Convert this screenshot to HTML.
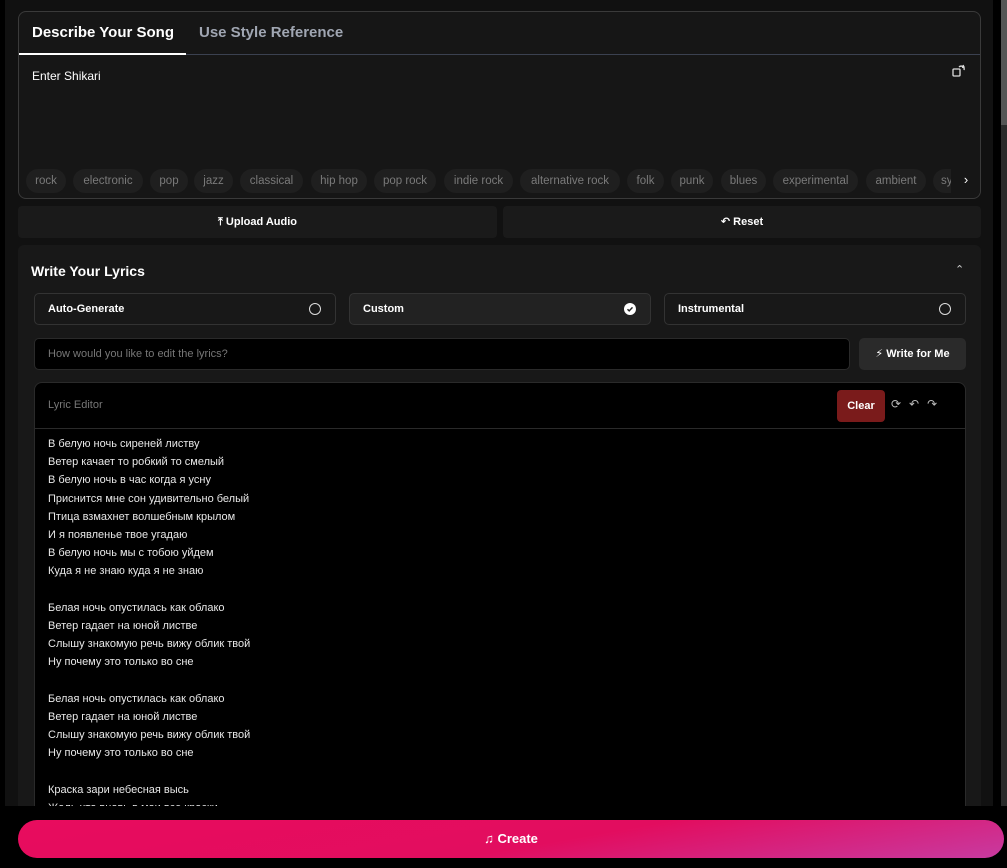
<!DOCTYPE html><html><head><meta charset="utf-8"><style>
*{box-sizing:border-box;margin:0;padding:0}
body{width:1007px;height:868px;background:#000;font-family:"Liberation Sans","DejaVu Sans",sans-serif;color:#fff;position:relative;overflow:hidden}
.main{position:absolute;left:5px;top:0;width:988px;height:806px;background:#111}
.sb{position:absolute;left:1001px;top:0;width:6px;height:806px;background:#2a2a2a}
.sb i{position:absolute;left:0;top:0;width:6px;height:125px;background:#555}
.abs{position:absolute}
.panel{left:18px;top:11px;width:963px;height:188px;border:1px solid #3a3a3a;border-radius:8px;background:#161616;overflow:hidden}
.tab{font-size:15px;font-weight:bold;top:12px}
.tags span{position:absolute;top:157px;background:#1f1f1f;color:#7a7a7a;font-size:11.5px;border-radius:12px;height:24px;line-height:24px;text-align:center;white-space:nowrap;overflow:hidden}
.btn{background:#1a1a1a;border-radius:4px;font-size:11px;font-weight:bold;text-align:center;line-height:32px;height:32px;top:206px}
.lyr{left:18px;top:245px;width:963px;height:600px;background:#181818;border-radius:6px}
.opt{top:293px;height:32px;border:1px solid #333;border-radius:5px;font-size:11px;font-weight:bold;padding-left:13px;line-height:30px;background:#181818}
.opt .c{position:absolute;right:14px;top:9px;width:12px;height:12px;border:1.5px solid #ddd;border-radius:50%}
.ed{left:34px;top:382px;width:932px;height:440px;background:#000;border:1px solid #2a2a2a;border-radius:8px}
.ly{position:absolute;left:13px;top:52px;font-size:11px;line-height:18.2px;color:#e8e8e8}
</style></head><body>
<div class="main"></div>
<div class="sb"><i></i></div>
<div class="abs panel">
 <div class="abs tab" style="left:13px;color:#fff">Describe Your Song</div>
 <div class="abs tab" style="left:180px;color:#a0a6b2;font-weight:600">Use Style Reference</div>
 <div class="abs" style="left:0;top:42px;width:961px;height:1px;background:#3b4150"></div>
 <div class="abs" style="left:0;top:41px;width:167px;height:2px;background:#fff"></div>
 <div class="abs" style="left:13px;top:57px;font-size:12px">Enter Shikari</div>
 <svg class="abs" style="left:933px;top:52px" width="14" height="14" viewBox="0 0 14 14" fill="none" stroke="#ddd" stroke-width="1.3"><rect x="1" y="5" width="7" height="7" rx="1"/><path d="M7 3a3 3 0 0 1 5 3M11 1l1 2-2 .5"/></svg>
 <div class="tags">
 <span style="left:7px;width:40px">rock</span>
 <span style="left:54px;width:70px">electronic</span>
 <span style="left:131px;width:38px">pop</span>
 <span style="left:175px;width:39px">jazz</span>
 <span style="left:221px;width:63px">classical</span>
 <span style="left:292px;width:56px">hip hop</span>
 <span style="left:355px;width:62px">pop rock</span>
 <span style="left:425px;width:69px">indie rock</span>
 <span style="left:501px;width:100px">alternative rock</span>
 <span style="left:608px;width:37px">folk</span>
 <span style="left:652px;width:42px">punk</span>
 <span style="left:702px;width:45px">blues</span>
 <span style="left:754px;width:85px">experimental</span>
 <span style="left:847px;width:60px">ambient</span>
 <span style="left:914px;width:40px;text-align:left;padding-left:8px">synth</span>
 </div>
 <div class="abs" style="left:932px;top:157px;width:30px;height:24px;background:#161616;font-size:13px;line-height:22px;text-align:center">›</div>
</div>
<div class="abs btn" style="left:18px;width:479px">⤒ Upload Audio</div>
<div class="abs btn" style="left:503px;width:478px">↶ Reset</div>
<div class="abs lyr"></div>
<div class="abs" style="left:31px;top:263px;font-size:14px;font-weight:bold">Write Your Lyrics</div>
<div class="abs" style="left:955px;top:263px;font-size:11px;color:#ccc">⌃</div>
<div class="abs opt" style="left:34px;width:302px">Auto-Generate<i class="c"></i></div>
<div class="abs opt" style="left:349px;width:302px;background:#222">Custom<svg class="abs" style="right:14px;top:9px" width="12" height="12" viewBox="0 0 12 12"><circle cx="6" cy="6" r="6" fill="#fff"/><path d="M3.5 6.2l1.7 1.7 3.3-3.5" fill="none" stroke="#222" stroke-width="1.4"/></svg></div>
<div class="abs opt" style="left:664px;width:302px">Instrumental<i class="c"></i></div>
<div class="abs" style="left:34px;top:338px;width:816px;height:32px;background:#000;border:1px solid #2a2a2a;border-radius:5px;font-size:11px;color:#777;padding-left:13px;line-height:30px">How would you like to edit the lyrics?</div>
<div class="abs" style="left:859px;top:338px;width:107px;height:32px;background:#2a2a2a;border-radius:5px;font-size:11px;font-weight:bold;text-align:center;line-height:32px">⚡ Write for Me</div>
<div class="abs ed">
 <div class="abs" style="left:13px;top:16px;font-size:11px;color:#777">Lyric Editor</div>
 <div class="abs" style="left:802px;top:7px;width:48px;height:32px;background:#7a1b1b;border-radius:4px;font-size:11px;font-weight:bold;text-align:center;line-height:32px">Clear</div>
 <div class="abs" style="left:856px;top:14px;font-size:12px;color:#bbb;letter-spacing:8px">⟳↶↷</div>
 <div class="abs" style="left:0;top:45px;width:930px;height:1px;background:#2a2a2a"></div>
 <div class="ly">В белую ночь сиреней листву<br>Ветер качает то робкий то смелый<br>В белую ночь в час когда я усну<br>Приснится мне сон удивительно белый<br>Птица взмахнет волшебным крылом<br>И я появленье твое угадаю<br>В белую ночь мы с тобою уйдем<br>Куда я не знаю куда я не знаю<br><br>Белая ночь опустилась как облако<br>Ветер гадает на юной листве<br>Слышу знакомую речь вижу облик твой<br>Ну почему это только во сне<br><br>Белая ночь опустилась как облако<br>Ветер гадает на юной листве<br>Слышу знакомую речь вижу облик твой<br>Ну почему это только во сне<br><br>Краска зари небесная высь<br>Жаль что вновь в мои все краски</div>
</div>
<div class="abs" style="left:0;top:806px;width:1007px;height:62px;background:#000"></div>
<div class="abs" style="left:18px;top:820px;width:986px;height:38px;border-radius:19px;background:linear-gradient(170deg,#e80c5e 0%,#e20d5f 55%,#c83aa0 100%);font-size:13px;font-weight:bold;text-align:center;line-height:38px">♫ Create</div>
</body></html>
